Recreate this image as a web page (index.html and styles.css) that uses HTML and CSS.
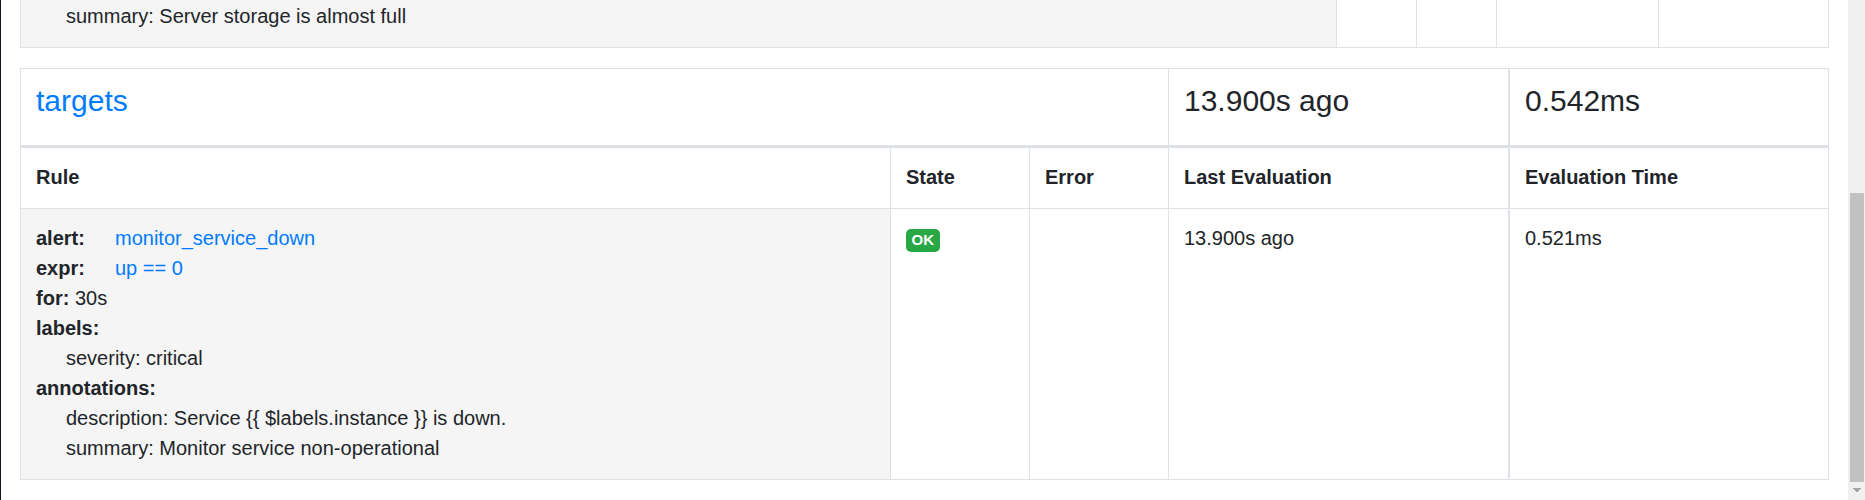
FILE: index.html
```html
<!DOCTYPE html>
<html lang="en">
<head>
<meta charset="utf-8">
<title>Rules</title>
<link rel="stylesheet" href="styles.css">
</head>
<body>
<div class="page">
  <main class="content">
    <section class="rules storage">
      <div class="cell rule"><div class="indent">summary: Server storage is almost full</div></div>
      <div class="cell"></div>
      <div class="cell"></div>
      <div class="cell"></div>
      <div class="cell"></div>
    </section>
    <section class="rules targets">
      <div class="cell group name"><h2><a href="#targets">targets</a></h2></div>
      <div class="cell group thick"><h2>13.900s ago</h2></div>
      <div class="cell group"><h2>0.542ms</h2></div>

      <div class="cell head">Rule</div>
      <div class="cell head">State</div>
      <div class="cell head">Error</div>
      <div class="cell head thick">Last Evaluation</div>
      <div class="cell head">Evaluation Time</div>

      <div class="cell rule">
        <div><b class="key">alert:</b><a href="#alert">monitor_service_down</a></div>
        <div><b class="key">expr:</b><a href="#expr">up == 0</a></div>
        <div><b>for:</b> 30s</div>
        <div><b>labels:</b></div>
        <div class="indent">severity: critical</div>
        <div><b>annotations:</b></div>
        <div class="indent">description: Service {{ $labels.instance }} is down.</div>
        <div class="indent">summary: Monitor service non-operational</div>
      </div>
      <div class="cell"><span class="badge">OK</span></div>
      <div class="cell"></div>
      <div class="cell thick">13.900s ago</div>
      <div class="cell">0.521ms</div>
    </section>
  </main>
  <aside class="scrollbar">
    <div class="thumb"></div>
    <svg class="arrow" width="8" height="4" viewBox="0 0 8 4" shape-rendering="crispEdges"><path d="M0 0h8v1H7v1H6v1H5v1H3V3H2V2H1V1H0z" fill="#a3a3a3"/></svg>
  </aside>
</div>
</body>
</html>
```
FILE: styles.css
```css
* { box-sizing: border-box; }

body {
  margin: 0;
  background: #fff;
  color: #212529;
  font: 20px/30px "Liberation Sans", Arial, sans-serif;
}

a { color: #007bff; text-decoration: none; }

.page {
  display: flex;
  height: 500px;
  overflow: hidden;
  border-left: 1px solid #11121f;
}

.content { flex: 1; padding: 0 19px; }

.rules {
  display: grid;
  border-left: 1px solid #dee2e6;
}

.storage {
  grid-template-columns: 1316fr 80fr 80fr 162fr 170fr;
  height: 48px;
  margin-bottom: 20px;
}

.targets {
  grid-template-columns: 870fr 139fr 139fr 341fr 319fr;
  border-top: 1px solid #dee2e6;
}

.cell {
  padding: 14px 15px 16px;
  border-right: 1px solid #dee2e6;
  border-bottom: 1px solid #dee2e6;
}
.storage .rule { padding-top: 1px; }
.thick { border-right-width: 2px; }
.rule { background: #f5f5f5; }

.group { border-bottom-width: 3px; }
.name { grid-column: span 3; }

h2 {
  margin: 0 0 10px;
  font-size: 30px;
  line-height: 36px;
  font-weight: 400;
}

.head { font-weight: 700; }
.key { display: inline-block; width: 79px; }
.indent { padding-left: 30px; }

.badge {
  display: inline-block;
  padding: 2.75px 5.5px 4.75px;
  border-radius: 5px;
  background: #28a745;
  color: #fff;
  font-size: 15px;
  font-weight: 700;
  line-height: 1;
}

.scrollbar {
  width: 17px;
  padding: 193px 1px 0 2px;
  background: #f0f0f0;
}
.thumb { height: 289px; background: #c1c1c1; }
.arrow { display: block; margin: 6px 0 0 3px; }
```
